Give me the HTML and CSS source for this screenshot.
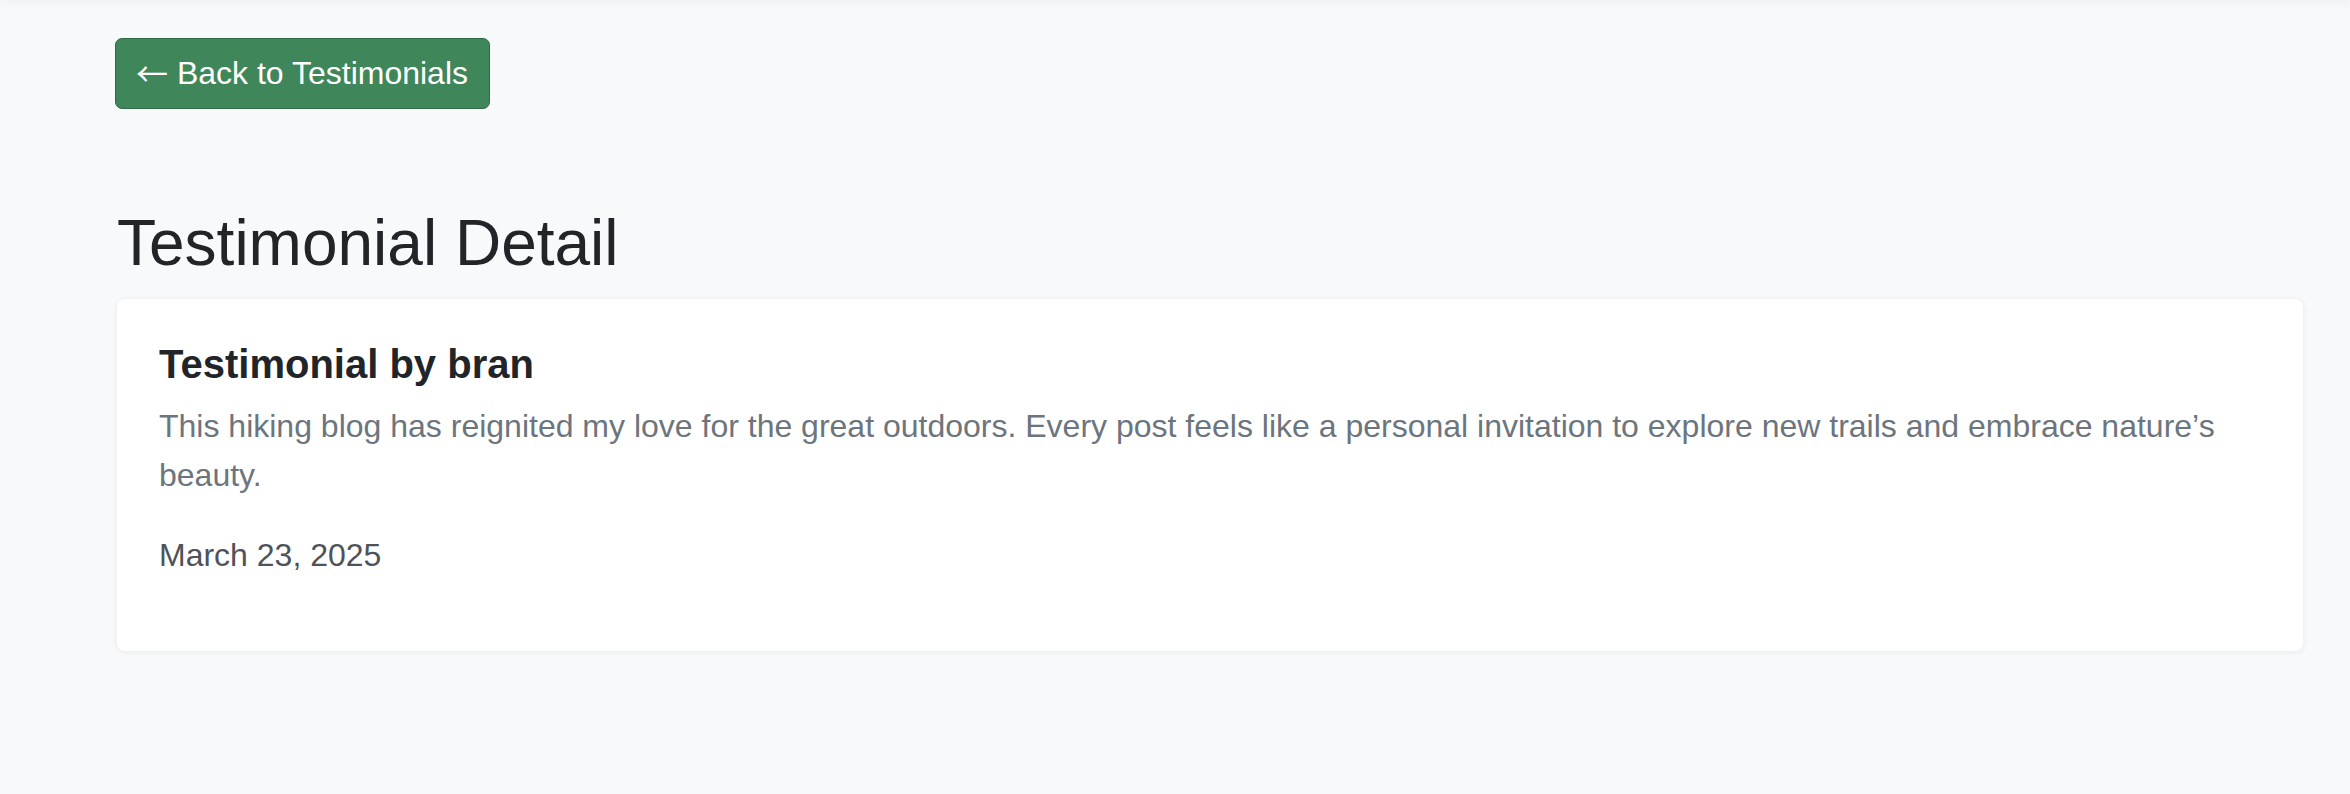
FILE: index.html
```html
<!DOCTYPE html>
<html lang="en">
<head>
<meta charset="utf-8">
<title>Testimonial Detail</title>
<link rel="stylesheet" href="styles.css">
</head>
<body>
<div class="topshadow"></div>
<div class="page">
  <div class="actions">
    <a class="btn-back" href="#"><span class="arrow">←</span> Back to Testimonials</a>
  </div>
  <main class="content">
    <h1 class="page-title">Testimonial Detail</h1>
    <section class="card">
      <h2 class="card-title">Testimonial by bran</h2>
      <p class="card-text">This hiking blog has reignited my love for the great outdoors. Every post feels like a personal invitation to explore new trails and embrace nature’s beauty.</p>
      <p class="card-date">March 23, 2025</p>
    </section>
  </main>
</div>
</body>
</html>
```
FILE: styles.css
```css
html, body {
  margin: 0;
  padding: 0;
}
body {
  background: #f8f9fa;
  font-family: "Liberation Sans", Arial, Helvetica, sans-serif;
  color: #212529;
  height: 794px;
  overflow: hidden;
}
.topshadow {
  height: 0;
  box-shadow: 0 0 10px 2px rgba(0, 0, 0, 0.07);
}
.page {
  padding: 38px 47px 0 115px;
}
.actions {
  display: flex;
}
.btn-back {
  display: inline-block;
  background: #3f865b;
  border: 1px solid #2e6a45;
  border-radius: 7px;
  color: #ffffff;
  text-decoration: none;
  font-size: 32px;
  line-height: 47px;
  height: 47px;
  padding: 11px 21px 11px 20px;
}
.arrow {
  font-family: "Noto Sans CJK JP", "DejaVu Sans", sans-serif;
  font-size: 32px;
  line-height: 1;
  vertical-align: -2px;
}
.content {
  padding-left: 2px;
}
.page-title {
  font-size: 64px;
  font-weight: 400;
  line-height: 75px;
  margin: 97px 0 18px 0;
  color: #212529;
}
.card {
  background: #ffffff;
  border-radius: 8px;
  box-shadow: 0 1px 6px rgba(0, 0, 0, 0.07);
  padding: 42px 42px 42px 42px;
}
.card-title {
  font-size: 40px;
  font-weight: 700;
  line-height: 47px;
  margin: 0 0 14px 0;
  color: #212529;
}
.card-text {
  font-size: 32px;
  line-height: 49px;
  margin: 0 0 31px 0;
  color: #6c757d;
}
.card-date {
  font-size: 32px;
  line-height: 49px;
  margin: 0 0 29px 0;
  color: #4d5359;
}
```
